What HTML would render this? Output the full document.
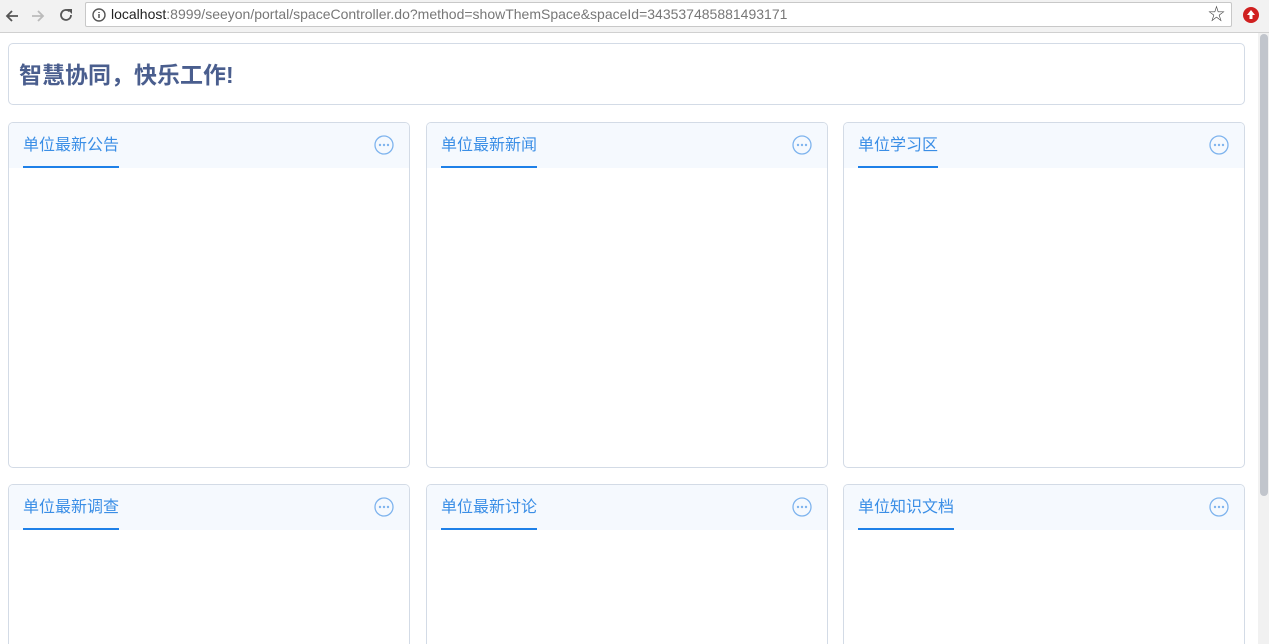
<!DOCTYPE html>
<html style="height:644px;overflow:hidden"><head><meta charset="utf-8"><style>
body{margin:0;width:1269px;height:644px;overflow:hidden;background:#fff;font-family:"Liberation Sans","Noto Sans CJK SC",sans-serif;position:relative}
.bar{position:absolute;left:0;top:0;width:1269px;height:32px;background:#f2f2f2;border-bottom:1px solid #d0d0d0}
.addr{position:absolute;left:85px;top:2px;width:1147px;height:25px;background:#fff;border:1px solid #c8c8c8;border-radius:2px;box-sizing:border-box;font-size:14px;line-height:23px;color:#777;padding-left:25px}
.addr b{font-weight:normal;color:#222}
.sb{position:absolute;left:1258px;top:33px;width:11px;height:611px;background:#f1f1f1}
.sb i{position:absolute;left:2px;top:1px;width:8px;height:462px;background:#c1c5cc;border-radius:4px}
.hd{position:absolute;left:8px;top:43px;width:1237px;height:62px;border:1px solid #d3dbe6;border-radius:5px;box-sizing:border-box}
.hd span{position:absolute;left:10px;top:12px;font-size:23px;font-weight:bold;color:#4a5e8e}
.c{position:absolute;width:402px;height:346px;border:1px solid #d3dbe6;border-radius:5px;box-sizing:border-box;overflow:hidden}
.c.b{height:160px;border-bottom:none;border-radius:5px 5px 0 0}
.c .h{height:45px;background:#f5f9fe;position:relative}
.c .t{position:absolute;left:14px;top:13px;font-size:16px;color:#3a8ee6;line-height:20px;padding-bottom:10px;border-bottom:2px solid #1e80e8}
.c svg{position:absolute;right:15px;top:12px}
</style></head><body>
<div class="bar">
<svg style="position:absolute;left:3px;top:7px" width="18" height="18"><path d="M15 9H4M9 4L4 9l5 5" stroke="#555" stroke-width="1.8" fill="none"/></svg>
<svg style="position:absolute;left:29px;top:7px" width="18" height="18"><path d="M3 9h11M9 4l5 5-5 5" stroke="#bbb" stroke-width="1.8" fill="none"/></svg>
<svg style="position:absolute;left:57px;top:6px" width="18" height="18"><path d="M14 9a5 5 0 1 1-1.5-3.6" stroke="#555" stroke-width="1.8" fill="none"/><path d="M10 3h5v5z" fill="#555"/></svg>
<div class="addr"><svg style="position:absolute;left:6px;top:5px" width="14" height="14"><circle cx="7" cy="7" r="6" stroke="#555" stroke-width="1.4" fill="none"/><path d="M7 6v4M7 4v1" stroke="#555" stroke-width="1.5"/></svg><b>localhost</b>:8999/seeyon/portal/spaceController.do?method=showThemSpace&amp;spaceId=343537485881493171
<span style="position:absolute;right:6px;top:0;color:#444;font-size:17px">☆</span></div>
<svg style="position:absolute;left:1242px;top:6px" width="18" height="18"><circle cx="9" cy="9" r="8" fill="#d02020"/><path d="M9 4l4 5h-2.5v4h-3v-4H5z" fill="#fff"/></svg>
</div>
<div class="sb"><i></i></div>
<div class="hd"><span>智慧协同，快乐工作!</span></div>
<div class="c" style="left:8px;top:122px"><div class="h"><span class="t">单位最新公告</span><svg width="20" height="20"><circle cx="10" cy="10" r="9" stroke="#7fb4ee" stroke-width="1.3" fill="none"/><circle cx="6" cy="10" r="1.2" fill="#7fb4ee"/><circle cx="10" cy="10" r="1.2" fill="#7fb4ee"/><circle cx="14" cy="10" r="1.2" fill="#7fb4ee"/></svg></div></div>
<div class="c" style="left:426px;top:122px"><div class="h"><span class="t">单位最新新闻</span><svg width="20" height="20"><circle cx="10" cy="10" r="9" stroke="#7fb4ee" stroke-width="1.3" fill="none"/><circle cx="6" cy="10" r="1.2" fill="#7fb4ee"/><circle cx="10" cy="10" r="1.2" fill="#7fb4ee"/><circle cx="14" cy="10" r="1.2" fill="#7fb4ee"/></svg></div></div>
<div class="c" style="left:843px;top:122px"><div class="h"><span class="t">单位学习区</span><svg width="20" height="20"><circle cx="10" cy="10" r="9" stroke="#7fb4ee" stroke-width="1.3" fill="none"/><circle cx="6" cy="10" r="1.2" fill="#7fb4ee"/><circle cx="10" cy="10" r="1.2" fill="#7fb4ee"/><circle cx="14" cy="10" r="1.2" fill="#7fb4ee"/></svg></div></div>
<div class="c b" style="left:8px;top:484px"><div class="h"><span class="t">单位最新调查</span><svg width="20" height="20"><circle cx="10" cy="10" r="9" stroke="#7fb4ee" stroke-width="1.3" fill="none"/><circle cx="6" cy="10" r="1.2" fill="#7fb4ee"/><circle cx="10" cy="10" r="1.2" fill="#7fb4ee"/><circle cx="14" cy="10" r="1.2" fill="#7fb4ee"/></svg></div></div>
<div class="c b" style="left:426px;top:484px"><div class="h"><span class="t">单位最新讨论</span><svg width="20" height="20"><circle cx="10" cy="10" r="9" stroke="#7fb4ee" stroke-width="1.3" fill="none"/><circle cx="6" cy="10" r="1.2" fill="#7fb4ee"/><circle cx="10" cy="10" r="1.2" fill="#7fb4ee"/><circle cx="14" cy="10" r="1.2" fill="#7fb4ee"/></svg></div></div>
<div class="c b" style="left:843px;top:484px"><div class="h"><span class="t">单位知识文档</span><svg width="20" height="20"><circle cx="10" cy="10" r="9" stroke="#7fb4ee" stroke-width="1.3" fill="none"/><circle cx="6" cy="10" r="1.2" fill="#7fb4ee"/><circle cx="10" cy="10" r="1.2" fill="#7fb4ee"/><circle cx="14" cy="10" r="1.2" fill="#7fb4ee"/></svg></div></div>
</body></html>
